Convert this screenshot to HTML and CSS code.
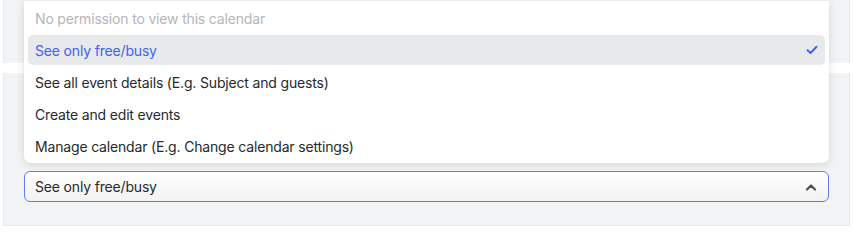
FILE: index.html
```html
<!DOCTYPE html>
<html lang="en">
<head>
<meta charset="utf-8">
<link rel="stylesheet" href="styles.css">
</head>
<body>
<div class="page">
  <div class="card card-top"></div>
  <div class="card card-bottom">
    <div class="select">
      <span class="select-value">See only free/busy</span>
      <svg class="chevron" width="12" height="8" viewBox="0 0 12 8"><path d="M2 6.5 L6 2.5 L10 6.5" fill="none" stroke="#4b4f56" stroke-width="2.2" stroke-linecap="round" stroke-linejoin="round"/></svg>
    </div>
  </div>
  <ul class="menu">
    <li class="item disabled">No permission to view this calendar</li>
    <li class="item selected">
      <span>See only free/busy</span>
      <svg class="check" width="12" height="10" viewBox="0 0 12 10"><path d="M1.5 5.2 L4.6 8 L10.5 1.8" fill="none" stroke="#3d63f5" stroke-width="2" stroke-linecap="round" stroke-linejoin="round"/></svg>
    </li>
    <li class="item">See all event details (E.g. Subject and guests)</li>
    <li class="item">Create and edit events</li>
    <li class="item">Manage calendar (E.g. Change calendar settings)</li>
  </ul>
</div>
</body>
</html>
```

FILE: styles.css
```css
* { box-sizing: border-box; }
html, body { margin: 0; padding: 0; background: #ffffff; }
body {
  font-family: Inter, "Noto Sans", "Liberation Sans", sans-serif;
  font-size: 14px;
  letter-spacing: -0.17px;
  color: #26292e;
  width: 854px;
  height: 230px;
  overflow: hidden;
}
.page {
  position: relative;
  padding: 0 4px 0 3px;
  display: flex;
  flex-direction: column;
  gap: 10px;
}
.card {
  background: #f2f3f5;
  border-left: 1px solid #e8e9ec;
  border-right: 1px solid #e8e9ec;
}
.card-top { height: 63px; }
.card-bottom {
  height: 153px;
  border-bottom: 1px solid #e6e7ea;
  padding: 98px 20px 0 20px;
}
.select {
  height: 31px;
  border: 1px solid #5c7cfa;
  border-radius: 6px;
  background: linear-gradient(#ffffff, #f2f2f3);
  display: flex;
  align-items: center;
  justify-content: space-between;
  padding: 0 11px 0 10px;
  color: #26292e;
}
.chevron { display: block; }
.menu {
  position: absolute;
  top: 1px;
  left: 24px;
  width: 805px;
  margin: 0;
  padding: 2px 4px;
  list-style: none;
  background: #ffffff;
  border-radius: 0 0 6px 6px;
  box-shadow: 0 2px 8px rgba(0, 0, 0, 0.12), 0 0 1px rgba(0, 0, 0, 0.1);
  display: flex;
  flex-direction: column;
  gap: 2px;
}
.item {
  height: 30px;
  padding: 0 7px;
  display: flex;
  align-items: center;
  justify-content: space-between;
  border-radius: 5px;
  color: #26292e;
}
.item.disabled { color: #b3b6bc; }
.item.selected { background: #e8e9ea; color: #3d63f5; }
.check { display: block; }
```
